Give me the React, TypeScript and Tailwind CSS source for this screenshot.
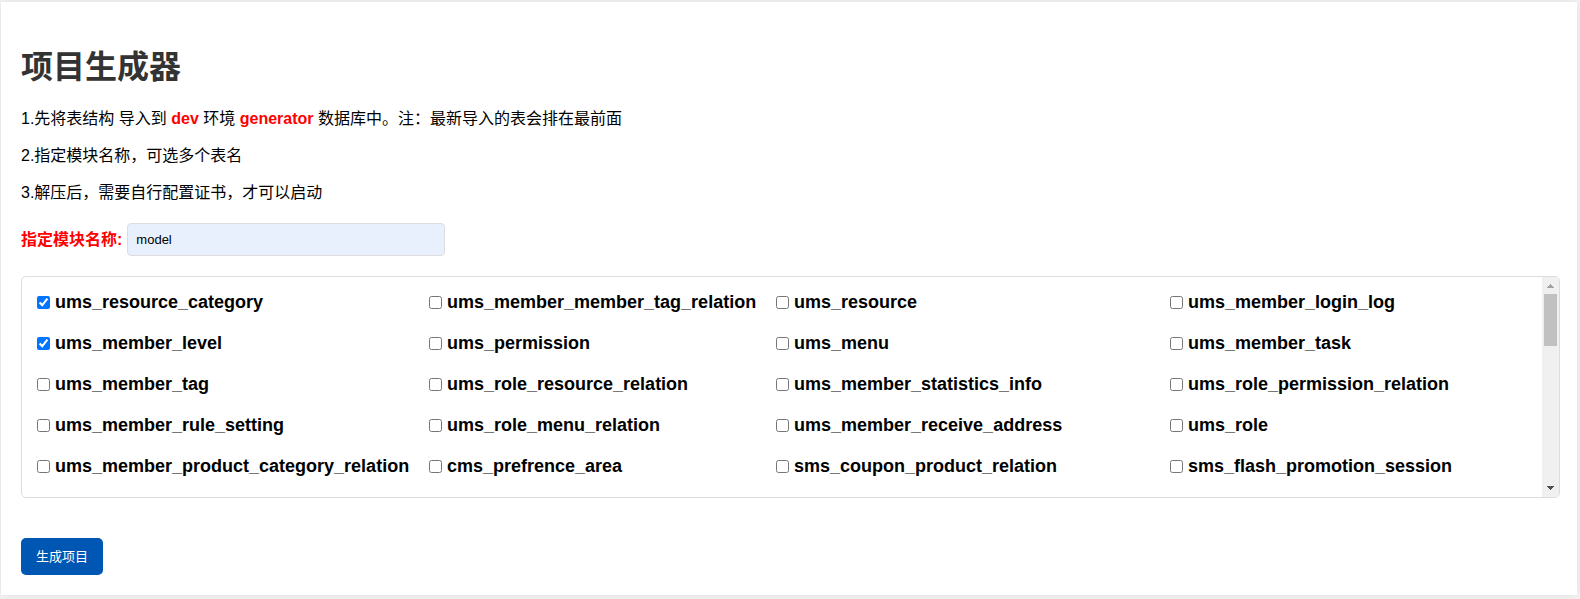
import { useState } from "react";

const rows: string[][] = [
  ["ums_resource_category", "ums_member_member_tag_relation", "ums_resource", "ums_member_login_log"],
  ["ums_member_level", "ums_permission", "ums_menu", "ums_member_task"],
  ["ums_member_tag", "ums_role_resource_relation", "ums_member_statistics_info", "ums_role_permission_relation"],
  ["ums_member_rule_setting", "ums_role_menu_relation", "ums_member_receive_address", "ums_role"],
  ["ums_member_product_category_relation", "cms_prefrence_area", "sms_coupon_product_relation", "sms_flash_promotion_session"],
];

function TableOption({ name, checked, onToggle }: { name: string; checked: boolean; onToggle: () => void }) {
  return (
    <label className="flex h-[41px] items-center gap-[5px] text-[18px] leading-[21px] font-bold whitespace-nowrap">
      <input
        type="checkbox"
        className="size-[13px] shrink-0 accent-[#0075ff]"
        checked={checked}
        onChange={onToggle}
      />
      {name}
    </label>
  );
}

function ScrollRail() {
  return (
    <div className="flex w-[17px] shrink-0 flex-col items-center justify-between bg-[#f0f0f0]" aria-hidden="true">
      <div className="flex flex-col items-center">
        <svg className="h-[17px] w-[17px]" viewBox="0 0 17 17" shapeRendering="crispEdges">
          <path d="M8 7h1v1h1v1h1v1h1v1H5v-1h1V9h1V8h1z" fill="#a3a3a3" />
        </svg>
        <div className="h-[52px] w-[13px] bg-[#c1c1c1]" />
      </div>
      <svg className="h-[17px] w-[17px]" viewBox="0 0 17 17" shapeRendering="crispEdges">
        <path d="M5 6h7v1h-1v1h-1v1H9v1H8V9H7V8H6V7H5z" fill="#505050" />
      </svg>
    </div>
  );
}

export default function App() {
  const [moduleName, setModuleName] = useState("model");
  const [selected, setSelected] = useState<string[]>(["ums_resource_category", "ums_member_level"]);

  const toggle = (name: string) =>
    setSelected((current) => (current.includes(name) ? current.filter((n) => n !== name) : [...current, name]));

  return (
    <div className="min-h-screen bg-[#f4f4f4] pt-[2px] pr-[3px] pb-[4px] pl-px font-['Liberation_Sans','Noto_Sans_CJK_SC',sans-serif] text-[16px] leading-[21px] text-black">
      <main className="bg-white px-5 pt-11 pb-5 shadow-[0_0_10px_rgba(0,0,0,0.1)]">
        <h1 className="text-[32px] leading-[42px] font-bold text-[#333]">项目生成器</h1>

        <div className="mt-5 flex flex-col gap-4">
          <p>
            1.先将表结构 导入到 <b className="text-[#f00]">dev</b> 环境 <b className="text-[#f00]">generator</b>{" "}
            数据库中。注：最新导入的表会排在最前面
          </p>
          <p>2.指定模块名称，可选多个表名</p>
          <p>3.解压后，需要自行配置证书，才可以启动</p>
        </div>

        <form onSubmit={(event) => event.preventDefault()}>
          <div className="mt-5 flex items-center gap-[5px]">
            <label htmlFor="module-name" className="font-bold text-[#f00]">
              指定模块名称:
            </label>
            <input
              id="module-name"
              type="text"
              className="h-[33px] w-[318px] rounded-[4px] border border-[#ddd] bg-[#e8f0fe] px-2 text-[13px] outline-none"
              value={moduleName}
              onChange={(event) => setModuleName(event.target.value)}
            />
          </div>

          <div className="mt-5 mr-[-3px] flex overflow-hidden rounded-[5px] border border-[#ddd]">
            <div className="grid min-w-0 grow grid-cols-[392fr_347fr_394fr_372fr] pt-[5px] pb-[10px] pl-[15px]">
              {rows.flat().map((name) => (
                <TableOption
                  key={name}
                  name={name}
                  checked={selected.includes(name)}
                  onToggle={() => toggle(name)}
                />
              ))}
            </div>
            <ScrollRail />
          </div>

          <button
            type="submit"
            className="mt-10 h-[37px] rounded-[5px] bg-[#0056b3] px-[15px] text-[13px] text-white"
          >
            生成项目
          </button>
        </form>
      </main>
    </div>
  );
}
